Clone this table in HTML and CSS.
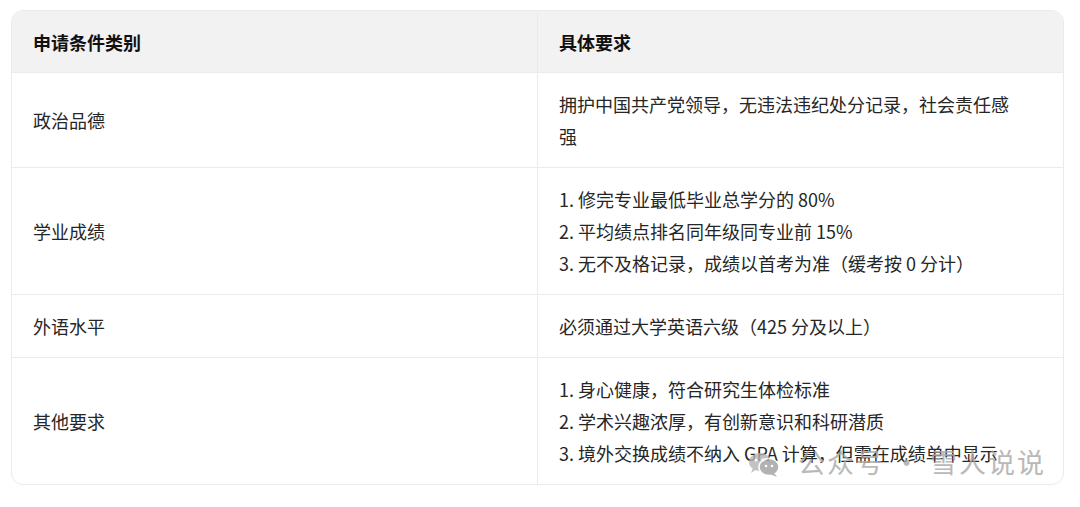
FILE: index.html
```html
<!DOCTYPE html>
<html lang="zh-CN">
<head>
<meta charset="utf-8">
<title>申请条件</title>
<link rel="stylesheet" href="styles.css">
</head>
<body>
<div class="page">
  <table class="req">
    <thead>
      <tr><th class="c1">申请条件类别</th><th class="c2">具体要求</th></tr>
    </thead>
    <tbody>
      <tr><td class="c1">政治品德</td><td class="c2">拥护中国共产党领导，无违法违纪处分记录，社会责任感强</td></tr>
      <tr><td class="c1">学业成绩</td><td class="c2"><div>1. 修完专业最低毕业总学分的 80%</div><div>2. 平均绩点排名同年级同专业前 15%</div><div>3. 无不及格记录，成绩以首考为准（缓考按 0 分计）</div></td></tr>
      <tr><td class="c1">外语水平</td><td class="c2">必须通过大学英语六级（425 分及以上）</td></tr>
      <tr><td class="c1 last">其他要求</td><td class="c2 last"><div>1. 身心健康，符合研究生体检标准</div><div>2. 学术兴趣浓厚，有创新意识和科研潜质</div><div>3. 境外交换成绩不纳入 GPA 计算，但需在成绩单中显示</div></td></tr>
    </tbody>
  </table>
  <div class="watermark">
    <svg class="wm-icon" width="32" height="26" viewBox="0 0 32 26">
      <ellipse cx="12" cy="10" rx="11" ry="9" fill="#b5b5b5"/>
      <path d="M5 16 L3 21 L9 17 Z" fill="#b5b5b5"/>
      <ellipse cx="21" cy="15" rx="10" ry="8.5" fill="#a0a0a0" stroke="#fff" stroke-width="1.5"/>
      <path d="M26 21 L29 25 L22 22 Z" fill="#a0a0a0"/>
      <circle cx="8" cy="8" r="1.5" fill="#fff"/>
      <circle cx="15" cy="8" r="1.5" fill="#fff"/>
      <circle cx="18" cy="14" r="1.3" fill="#fff"/>
      <circle cx="24" cy="14" r="1.3" fill="#fff"/>
    </svg>
    <span class="wm-text">公众号 · 雪人说说</span>
  </div>
</div>
</body>
</html>
```

FILE: styles.css
```css
html, body {
  margin: 0;
  padding: 0;
  background: #ffffff;
}
.page {
  position: relative;
  padding: 10px 11px;
  font-family: "Noto Sans CJK SC", "Noto Sans", sans-serif;
}
.req {
  width: 1053px;
  border-collapse: separate;
  border-spacing: 0;
  border: 1px solid #ebebeb;
  border-radius: 12px;
  overflow: hidden;
  table-layout: fixed;
  font-size: 18px;
  line-height: 32px;
  color: #262626;
}
.req th, .req td {
  text-align: left;
  vertical-align: middle;
  padding: 15px 21px;
  border-bottom: 1px solid #ebebeb;
}
.req th {
  padding-bottom: 14px;
  background: #f2f2f2;
  font-weight: 700;
  color: #111;
}
.req .c1 {
  width: 483px;
  border-right: 1px solid #ebebeb;
}
.req .c2 {
  padding-right: 52px;
}
.req .last {
  border-bottom: none;
}
.watermark {
  position: absolute;
  left: 748px;
  top: 444px;
  display: flex;
  align-items: center;
  gap: 18px;
  opacity: 0.8;
  pointer-events: none;
}
.wm-icon {
  display: block;
  margin-top: 6px;
}
.wm-text {
  font-size: 27px;
  letter-spacing: 2px;
  color: #a8a8a8;
  line-height: 36px;
}
```
